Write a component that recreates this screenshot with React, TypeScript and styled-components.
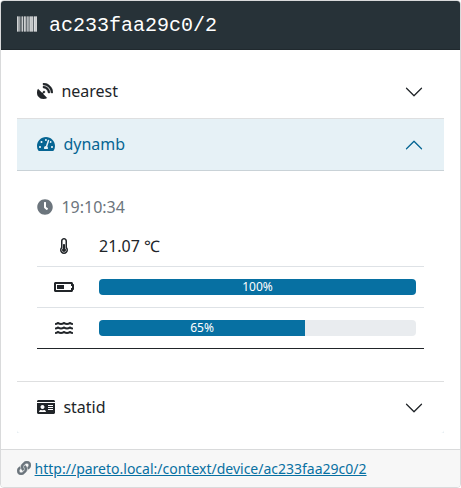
import React from 'react';
import styled, { createGlobalStyle, css } from 'styled-components';
import {
  FaBarcode,
  FaBatteryHalf,
  FaClock,
  FaIdCard,
  FaLink,
  FaSatelliteDish,
  FaTachometerAlt,
  FaThermometerHalf,
  FaWater,
} from 'react-icons/fa';

const GlobalStyle = createGlobalStyle`
  *, *::before, *::after { box-sizing: border-box; }
  body {
    margin: 0;
    background: #fff;
    color: #212529;
    font: 16px/24px "Noto Sans", sans-serif;
  }
`;

const Card = styled.article`
  display: flex;
  flex-direction: column;
  height: 488px;
  border: 1px solid #d9dadb;
  border-radius: 4px;
  overflow: hidden;
  background: #fff;
`;

const CardHeader = styled.header`
  display: flex;
  align-items: center;
  gap: 12px;
  height: 49px;
  padding: 0 16px;
  background: #273238;
  color: #fff;
  border-bottom: 1px solid #20292e;
  font: 20px/24px "Liberation Mono", monospace;
`;

const Icon = styled.span<{ $width: number; $size?: number; $weight?: number }>`
  display: inline-flex;
  flex: none;
  svg {
    display: block;
    width: ${(p) => p.$width}px;
    height: ${(p) => p.$size ?? 16}px;
    stroke-width: ${(p) => p.$weight ?? 0};
  }
`;

const HeaderIcon = styled(Icon)`
  margin-bottom: 2px;
`;

const HeaderTitle = styled.span`
  padding-top: 1px;
`;

const Accordion = styled.div`
  flex: 1;
  padding: 16px 16px 0;
`;

const AccordionButton = styled.button<{ $open?: boolean; $last?: boolean }>`
  display: flex;
  align-items: center;
  width: 100%;
  height: ${(p) => (p.$last ? 51 : 52)}px;
  padding: 0 20px;
  border: 0;
  border-radius: ${(p) => (p.$last ? '0 0 3px 3px' : '0')};
  background: #fff;
  color: #212529;
  font: inherit;
  text-align: left;
  ${(p) =>
    p.$open &&
    css`
      background: #e6f1f6;
      color: #066593;
      border-bottom: 1px solid #c9d2d7;
    `}
`;

const AccordionItem = styled.section<{ $last?: boolean }>`
  border-bottom: ${(p) => (p.$last ? 0 : '1px solid #dedfe0')};
  border-radius: ${(p) => (p.$last ? '0 0 1px 1px' : '0')};
  background: ${(p) => (p.$last ? '#dce7ec' : '#fff')};
`;

const Label = styled.span`
  display: flex;
  flex: 1;
  align-items: center;
  gap: 8.4px;
  padding-bottom: 2px;
`;

const Chevron = styled.svg<{ $up?: boolean }>`
  width: 20px;
  height: 20px;
  transform: ${(p) => (p.$up ? 'rotate(180deg)' : 'none')};
`;

const Panel = styled.div`
  height: 210px;
  padding: 24px 20px 0;
`;

const Time = styled.div`
  display: flex;
  align-items: center;
  gap: 8.4px;
  height: 24px;
  color: #6c757d;
`;

const Readings = styled.div`
  margin-top: 7px;
`;

const Reading = styled.div<{ $last?: boolean }>`
  display: grid;
  grid-template-columns: 54px 1fr;
  align-items: center;
  height: 41px;
  padding-right: 8px;
  border-bottom: 1px solid ${(p) => (p.$last ? '#212529' : '#dee2e6')};
`;

const ReadingIcon = styled(Icon)`
  justify-content: center;
`;

const Value = styled.span`
  padding-left: 8px;
`;

const Progress = styled.div`
  height: 16px;
  margin-left: 8px;
  border-radius: 4px;
  overflow: hidden;
  background: #e9ecef;
`;

const Bar = styled.div`
  height: 100%;
  background: #0770a2;
  color: #fff;
  text-align: center;
  font-size: 12px;
  line-height: 16px;
`;

const CardFooter = styled.footer`
  display: flex;
  align-items: center;
  gap: 3.6px;
  height: 38px;
  padding: 0 16px;
  border-top: 1px solid #d9dadb;
  background: #f7f7f7;
  color: #6c757d;
  font-size: 14px;
`;

const LinkIcon = styled(Icon)`
  margin-bottom: 1px;
`;

const Link = styled.a`
  color: #0770a2;
  text-decoration: underline;
`;

const Arrow = ({ up }: { up?: boolean }) => (
  <Chevron $up={up} viewBox="0 0 16 16" fill="currentColor">
    <path
      fillRule="evenodd"
      d="M1.646 4.646a.5.5 0 0 1 .708 0L8 10.293l5.646-5.647a.5.5 0 0 1 .708.708l-6 6a.5.5 0 0 1-.708 0l-6-6a.5.5 0 0 1 0-.708z"
    />
  </Chevron>
);

const Level = ({ percent }: { percent: number }) => (
  <Progress>
    <Bar style={{ width: `${percent}%` }}>{percent}%</Bar>
  </Progress>
);

export default function App() {
  return (
    <>
      <GlobalStyle />
      <Card>
        <CardHeader>
          <HeaderIcon $width={20} $size={20} $weight={5}><FaBarcode /></HeaderIcon>
          <HeaderTitle>ac233faa29c0/2</HeaderTitle>
        </CardHeader>
        <Accordion>
          <AccordionItem>
            <AccordionButton>
              <Label>
                <Icon $width={16} $weight={12}><FaSatelliteDish /></Icon>
                nearest
              </Label>
              <Arrow />
            </AccordionButton>
          </AccordionItem>
          <AccordionItem>
            <AccordionButton $open>
              <Label>
                <Icon $width={18}><FaTachometerAlt /></Icon>
                dynamb
              </Label>
              <Arrow up />
            </AccordionButton>
            <Panel>
              <Time>
                <Icon $width={16}><FaClock /></Icon>
                <span>19:10:34</span>
              </Time>
              <Readings>
                <Reading>
                  <ReadingIcon $width={8}><FaThermometerHalf /></ReadingIcon>
                  <Value>21.07 ℃</Value>
                </Reading>
                <Reading>
                  <ReadingIcon $width={20}><FaBatteryHalf /></ReadingIcon>
                  <Level percent={100} />
                </Reading>
                <Reading $last>
                  <ReadingIcon $width={18}><FaWater /></ReadingIcon>
                  <Level percent={65} />
                </Reading>
              </Readings>
            </Panel>
          </AccordionItem>
          <AccordionItem $last>
            <AccordionButton $last>
              <Label>
                <Icon $width={18}><FaIdCard /></Icon>
                statid
              </Label>
              <Arrow />
            </AccordionButton>
          </AccordionItem>
        </Accordion>
        <CardFooter>
          <LinkIcon $width={14} $size={14} $weight={20}><FaLink /></LinkIcon>
          <Link href="http://pareto.local:/context/device/ac233faa29c0/2">
            http://pareto.local:/context/device/ac233faa29c0/2
          </Link>
        </CardFooter>
      </Card>
    </>
  );
}
